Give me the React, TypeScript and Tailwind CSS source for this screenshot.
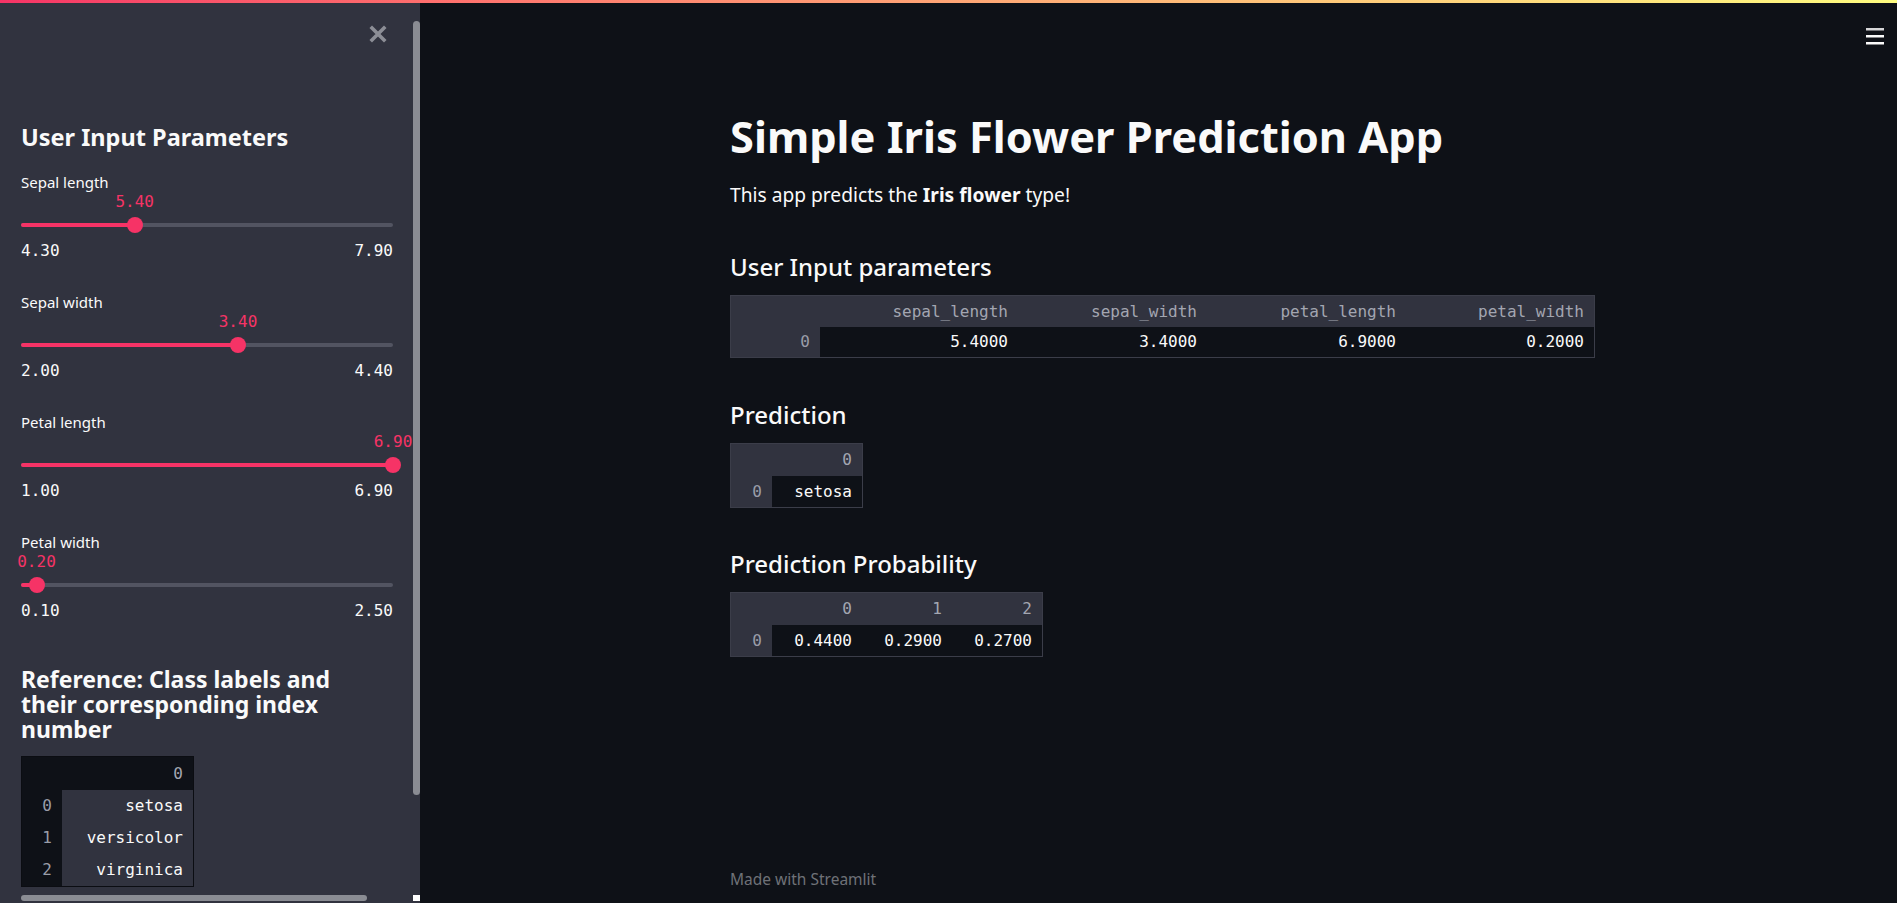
import React from 'react';

const sans = "font-['Noto_Sans',sans-serif]";
const mono = "font-['DejaVu_Sans_Mono','Liberation_Mono',monospace]";

type SliderDef = { label: string; value: number; min: number; max: number };

const sliders: SliderDef[] = [
  { label: 'Sepal length', value: 5.4, min: 4.3, max: 7.9 },
  { label: 'Sepal width', value: 3.4, min: 2.0, max: 4.4 },
  { label: 'Petal length', value: 6.9, min: 1.0, max: 6.9 },
  { label: 'Petal width', value: 0.2, min: 0.1, max: 2.5 },
];

const Slider: React.FC<{ s: SliderDef; last: boolean }> = ({ s, last }) => {
  const pct = ((s.value - s.min) / (s.max - s.min)) * 100;
  return (
    <div className={last ? '' : 'mb-[28px]'}>
      <div className="h-5 text-[15px] leading-5 text-[#fafafa]">{s.label}</div>
      <div className={`relative h-5 ${mono} text-[16px] leading-5 text-[#f63366]`}>
        <span className="absolute top-0 -translate-x-1/2" style={{ left: `${pct}%` }}>
          {s.value.toFixed(2)}
        </span>
      </div>
      <div className="flex h-[26px] items-center">
        <div className="relative h-1 w-full rounded-full bg-[#525461]">
          <div className="absolute left-0 top-0 h-1 rounded-full bg-[#f63366]" style={{ width: `${pct}%` }} />
          <div
            className="absolute top-1/2 h-4 w-4 -translate-x-1/2 -translate-y-1/2 rounded-full bg-[#f63366]"
            style={{ left: `${pct}%` }}
          />
        </div>
      </div>
      <div className={`flex h-[26px] items-center justify-between ${mono} text-[16px] text-[#fafafa]`}>
        <span>{s.min.toFixed(2)}</span>
        <span>{s.max.toFixed(2)}</span>
      </div>
    </div>
  );
};

type TableProps = {
  columns: string[];
  rows: string[][];
  indexWidth: string;
  colWidths: string[];
  inSidebar?: boolean;
  headH?: string;
  rowH?: string;
};

const DataTable: React.FC<TableProps> = ({
  columns,
  rows,
  indexWidth,
  colWidths,
  inSidebar,
  headH = 'h-[32px]',
  rowH = 'h-[31px]',
}) => {
  const headBg = inSidebar ? 'bg-[#0e1117]' : 'bg-[#31333f]';
  const cellBg = inSidebar ? 'bg-[#31333f]' : 'bg-[#0e1117]';
  const border = inSidebar ? 'border-[#0b0d12]' : 'border-[#3b3d49]';
  return (
    <div className={`inline-flex flex-col border ${border} ${mono} text-[16px]`}>
      <div className={`flex ${headH} ${headBg}`}>
        <div className={`${indexWidth}`} />
        {columns.map((c, i) => (
          <div key={c + i} className={`${colWidths[i]} flex items-center justify-end pr-[10px] text-[#a3a6b1]`}>
            {c}
          </div>
        ))}
      </div>
      {rows.map((r, ri) => (
        <div key={ri} className={`flex ${rowH}`}>
          <div className={`${indexWidth} ${headBg} flex items-center justify-end pr-[10px] text-[#9a9da8]`}>{ri}</div>
          {r.map((v, ci) => (
            <div
              key={ci}
              className={`${colWidths[ci]} ${cellBg} flex items-center justify-end pr-[10px] text-[#fafafa]`}
            >
              {v}
            </div>
          ))}
        </div>
      ))}
    </div>
  );
};

const App: React.FC = () => {
  return (
    <div className={`flex h-[903px] w-full flex-col overflow-hidden bg-[#0e1117] ${sans}`}>
      <div className="h-[3px] w-full bg-linear-to-r from-[#f63366] to-[#fffd80]" />

      <div className="flex min-h-0 flex-1">
        {/* Sidebar */}
        <aside className="flex w-[420px] shrink-0 overflow-hidden bg-[#31333f]">
          <div className="flex min-w-0 flex-1 flex-col pl-[21px] pr-[20px]">
            <div className="flex justify-end pr-[6px] pt-[22px]">
              <svg width="18" height="18" viewBox="0 0 18 18">
                <path d="M3 3 L15 15 M15 3 L3 15" stroke="#8c8e96" strokeWidth="3.6" strokeLinecap="square" />
              </svg>
            </div>

            <h2 className="mt-[79px] text-[23.5px] font-bold leading-[30px] text-[#fafafa]">User Input Parameters</h2>

            <div className="mt-5">
              {sliders.map((s, i) => (
                <Slider key={s.label} s={s} last={i === sliders.length - 1} />
              ))}
            </div>

            <h2 className="mt-[43px] text-[23px] font-bold leading-[25px] text-[#fafafa]">
              <span className="block whitespace-nowrap">Reference: Class labels and</span>
              <span className="block whitespace-nowrap">their corresponding index</span>
              <span className="block whitespace-nowrap">number</span>
            </h2>

            <div className="mt-[14px]">
              <DataTable
                inSidebar
                columns={['0']}
                rows={[['setosa'], ['versicolor'], ['virginica']]}
                indexWidth="w-[40px]"
                colWidths={['w-[131px]']}
                headH="h-[33px]"
                rowH="h-[32px]"
              />
            </div>

            <div className="mt-[8px] h-[6px] w-[346px] shrink-0 rounded-full bg-[#8a8c93]" />
          </div>

          {/* scrollbar */}
          <div className="flex w-[7px] flex-col">
            <div className="mt-[18px] h-[774px] rounded-full bg-[#8a8c93]" />
            <div className="mb-[2px] mt-auto h-[6px] bg-white" />
          </div>
        </aside>

        {/* Main */}
        <main className="relative flex min-w-0 flex-1 flex-col pl-[310px] pt-[107px] text-[#fafafa]">
          <button className="absolute right-[13px] top-[25px]">
            <svg width="18" height="17" viewBox="0 0 18 17">
              <rect x="0" y="0" width="18" height="2.5" fill="#d6d6d8" />
              <rect x="0" y="7" width="18" height="2.5" fill="#fafafa" />
              <rect x="0" y="14" width="18" height="2.5" fill="#fafafa" />
            </svg>
          </button>

          <h1 className="text-[43.4px] font-bold leading-[53px]">Simple Iris Flower Prediction App</h1>
          <p className="mt-5 text-[19.2px] leading-6">
            This app predicts the <span className="font-bold">Iris flower</span> type!
          </p>

          <h3 className="mt-[44px] text-[24px] font-medium leading-8">User Input parameters</h3>
          <div className="mt-3">
            <DataTable
              columns={['sepal_length', 'sepal_width', 'petal_length', 'petal_width']}
              rows={[['5.4000', '3.4000', '6.9000', '0.2000']]}
              indexWidth="w-[89px]"
              colWidths={['w-[198px]', 'w-[189px]', 'w-[199px]', 'w-[188px]']}
              headH="h-[31px]"
              rowH="h-[30px]"
            />
          </div>

          <h3 className="mt-[41px] text-[24px] font-medium leading-8">Prediction</h3>
          <div className="mt-3">
            <DataTable columns={['0']} rows={[['setosa']]} indexWidth="w-[41px]" colWidths={['w-[90px]']} />
          </div>

          <h3 className="mt-[40px] text-[24px] font-medium leading-8">Prediction Probability</h3>
          <div className="mt-3">
            <DataTable
              columns={['0', '1', '2']}
              rows={[['0.4400', '0.2900', '0.2700']]}
              indexWidth="w-[41px]"
              colWidths={['w-[90px]', 'w-[90px]', 'w-[90px]']}
            />
          </div>

          <footer className="mb-[14px] mt-auto text-[15.5px] leading-5 text-[#6f7177]">Made with Streamlit</footer>
        </main>
      </div>
    </div>
  );
};

export default App;
